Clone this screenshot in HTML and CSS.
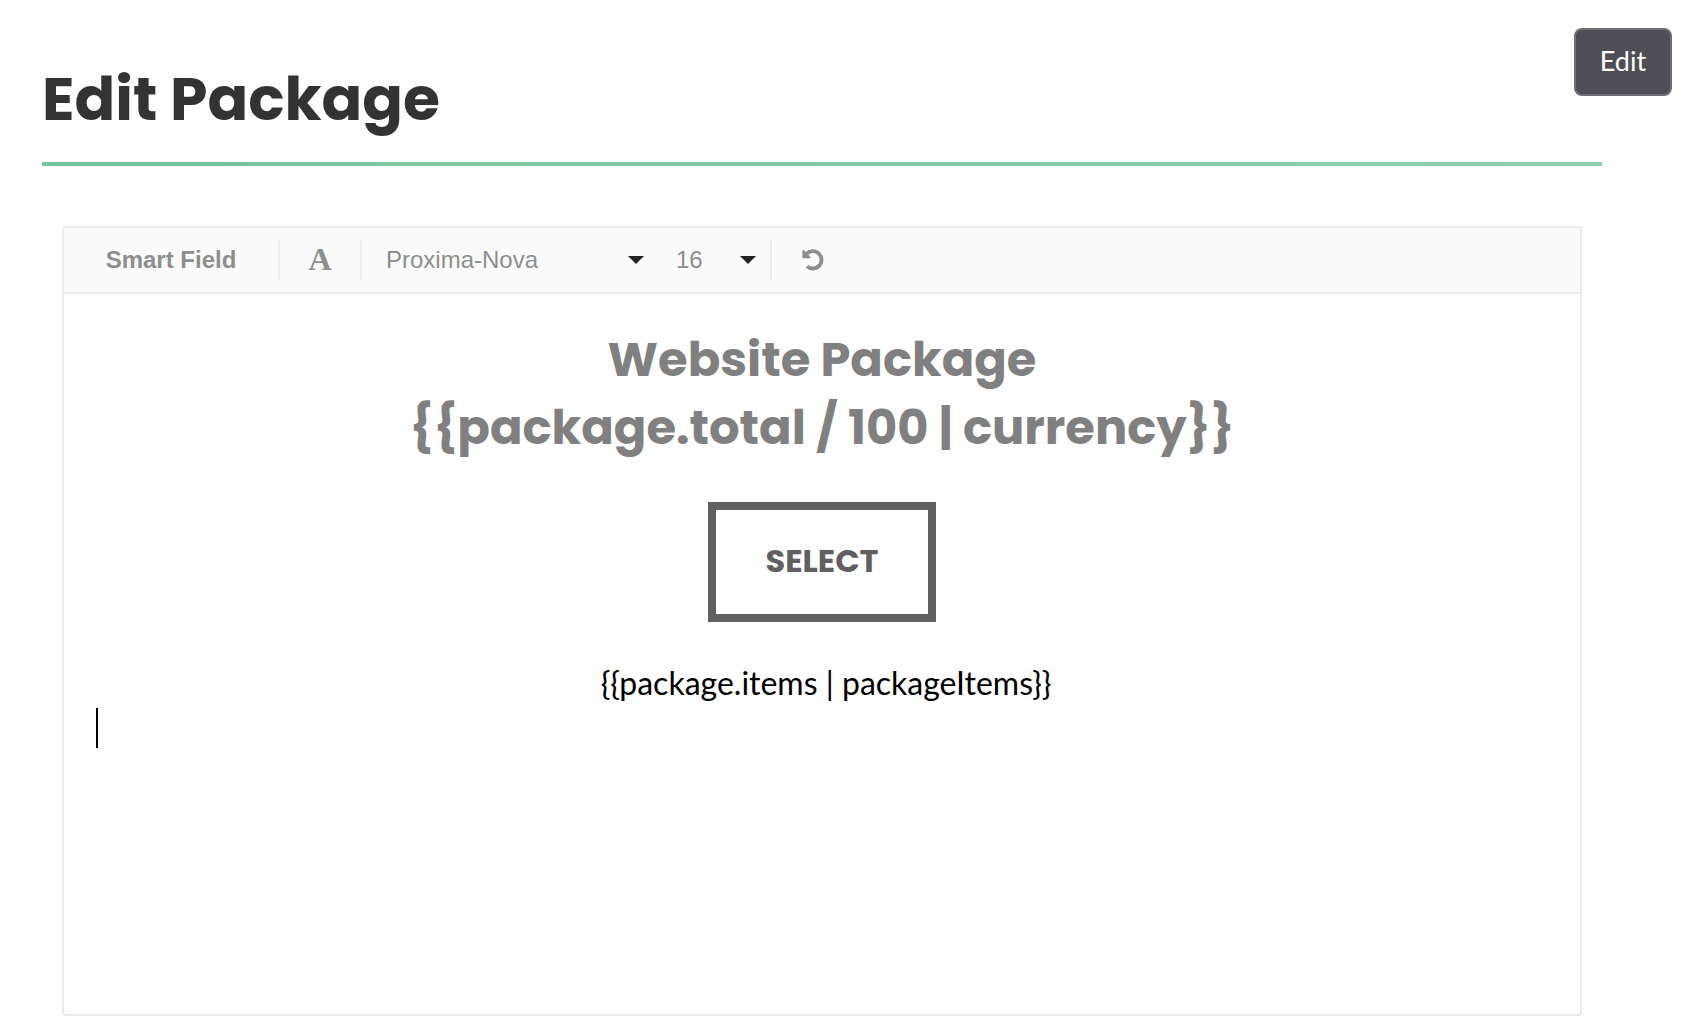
FILE: index.html
```html
<!DOCTYPE html>
<html lang="en">
<head>
    <meta charset="UTF-8">
    <meta name="viewport" content="width=device-width, initial-scale=1.0">
    <title>Edit Package</title>
    <link rel="stylesheet" href="styles.css">
</head>
<body>
    <button type="button" class="edit-btn">Edit</button>

    <main class="container">
        <header class="page-header">
            <h1>Edit Package</h1>
        </header>

        <section class="editor">
            <div class="toolbar">
                <button type="button" class="tool smart-field">Smart Field</button>
                <button type="button" class="tool font-btn" aria-label="Font style">A</button>
                <div class="tool selects">
                    <div class="select-wrap font-family">
                        <select aria-label="Font family">
                            <option>Proxima-Nova</option>
                            <option>Poppins</option>
                        </select>
                    </div>
                    <div class="select-wrap font-size">
                        <select aria-label="Font size">
                            <option>16</option>
                            <option>24</option>
                        </select>
                    </div>
                </div>
                <button type="button" class="tool undo-btn" aria-label="Undo">
                    <svg width="22" height="22" viewBox="0 0 22 22" fill="none">
                        <path d="M3.4 6.2A8.7 8.7 0 1 1 5 17.3" stroke="#8c8f8d" stroke-width="3.8"/>
                        <path d="M.4 1.6V8.4Q.4 9.2 1.2 9.2H8Q9.2 9 8.4 8L2 1.2Q.6 .4 .4 1.6Z" fill="#8c8f8d"/>
                    </svg>
                </button>
            </div>

            <div class="content" contenteditable="true" spellcheck="false">
                <h2>Website Package<br>{{package.total / 100 | currency}}</h2>
                <a href="#" class="select-btn">SELECT</a>
                <p class="items">&nbsp;{{package.items | packageItems}}</p>
                <div class="caret"></div>
            </div>
        </section>
    </main>
</body>
</html>
```
FILE: styles.css
```css
* {
    box-sizing: border-box;
}
body {
    margin: 0;
    background-color: #fefefe;
    font-family: Lato, sans-serif;
    position: relative;
}
button {
    border: none;
    background: none;
    cursor: pointer;
}
.edit-btn {
    position: absolute;
    top: 28px;
    right: 20px;
    width: 98px;
    height: 68px;
    padding: 0 0 4px;
    background-color: #4f4e54;
    color: #fff;
    border: 2px solid #6f6e73;
    border-radius: 8px;
    font-family: Lato, sans-serif;
    font-size: 27px;
}
.container {
    padding: 56px 90px 12px 42px;
}
.page-header {
    border-bottom: 4px solid;
    border-image: linear-gradient(to right, #75c49a, #8fceaf) 1;
}
h1 {
    margin: 0;
    padding-bottom: 20px;
    color: #333;
    font-family: Poppins, Inter, sans-serif;
    font-size: 60px;
    font-weight: 700;
    line-height: 86px;
}
.editor {
    margin: 60px 20px 0;
    border: 2px solid #ebebeb;
    border-radius: 4px;
}
.toolbar {
    display: flex;
    align-items: center;
    height: 66px;
    background-color: #fafafa;
    border-bottom: 2px solid #ebebeb;
}
.tool {
    display: flex;
    align-items: center;
    justify-content: center;
    height: 40px;
    padding: 0;
    color: #8c8f8d;
    border-right: 2px solid #ebebeb;
}
.smart-field {
    width: 216px;
    font: bold 24px "Liberation Sans", Arial, sans-serif;
}
.font-btn {
    width: 82px;
    padding-bottom: 2px;
    font: bold 32px "Liberation Serif", serif;
}
.selects {
    padding: 0 14px 0 24px;
    gap: 32px;
}
.select-wrap {
    display: flex;
    align-items: center;
    position: relative;
}
.select-wrap::after {
    content: "";
    position: absolute;
    right: 0;
    border: 8px solid transparent;
    border-top-color: #222;
    border-bottom: 0;
    pointer-events: none;
}
.select-wrap select {
    appearance: none;
    width: 100%;
    height: 40px;
    padding: 0 0 2px;
    border: none;
    background: none;
    color: #8c8f8d;
    font: 24px "Liberation Sans", Arial, sans-serif;
}
.font-family {
    width: 258px;
}
.font-size {
    width: 80px;
}
.undo-btn {
    width: 82px;
    border-right: none;
}
.content {
    min-height: 720px;
    padding: 32px;
    outline: none;
    text-align: center;
    color: #000;
}
h2 {
    margin: 0 0 40px;
    color: #808080;
    font-family: Poppins, Inter, sans-serif;
    font-size: 48px;
    font-weight: 700;
    line-height: 68px;
}
.select-btn {
    display: inline-block;
    padding: 31px 50px 33px;
    border: 8px solid #606060;
    color: #606060;
    font-family: Poppins, Inter, sans-serif;
    font-size: 32px;
    font-weight: 700;
    line-height: 40px;
    text-decoration: none;
}
.items {
    margin: 36px 0 0;
    font-size: 32px;
    line-height: 50px;
}
.caret {
    width: 2px;
    height: 40px;
    background-color: #000;
}
```
